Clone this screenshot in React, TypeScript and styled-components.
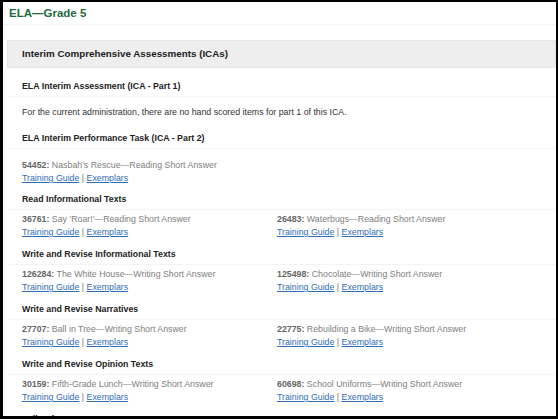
import React from "react";
import styled, { createGlobalStyle } from "styled-components";

const Global = createGlobalStyle`
  html, body { margin: 0; padding: 0; background: #000; }
  body { font-family: "Liberation Sans", Arial, sans-serif; }
`;

const Frame = styled.div`
  box-sizing: border-box;
  width: 558px;
  height: 419px;
  border-style: solid;
  border-color: #000;
  border-width: 2px 2px 3px 3px;
  background: #fff;
  overflow: hidden;
`;

const Title = styled.h1`
  margin: 0;
  height: 22px;
  line-height: 22px;
  padding-left: 6px;
  font-size: 11.5px;
  font-weight: bold;
  color: #1f6b3e;
  border-bottom: 1px solid #f3f3f3;
`;

const Section = styled.section`
  margin: 15px 0 0 4px;
`;

const SectionHeader = styled.h2`
  box-sizing: border-box;
  margin: 0;
  height: 28px;
  line-height: 26px;
  padding-left: 14px;
  background: #eeeeee;
  border: 1px solid #e6e6e6;
  font-size: 9.8px;
  font-weight: bold;
  color: #222;
`;

const Body = styled.div`
  margin-top: 9px;
  color: #333;
  font-size: 8.8px;
`;

const GroupHeading = styled.h3`
  box-sizing: border-box;
  margin: 0;
  height: 20px;
  line-height: 19px;
  padding-left: 15px;
  font-size: 8.8px;
  font-weight: bold;
  color: #222;
  border-bottom: 1px solid #f3f3f3;
`;

const Note = styled.p`
  margin: 0;
  padding: 9px 0 10px 15px;
  line-height: 13px;
  color: #333;
`;

const ItemGrid = styled.div<{ $top: number; $bottom: number }>`
  display: grid;
  grid-template-columns: 255px 1fr;
  padding: ${(p) => p.$top}px 0 ${(p) => p.$bottom}px 15px;
  line-height: 13px;
`;

const Item = styled.div``;

const ItemTitle = styled.div`
  color: #808080;
  b {
    color: #666;
    font-weight: bold;
  }
`;

const Links = styled.div`
  color: #777;
  a {
    color: #2f6db6;
    text-decoration: underline;
  }
`;

type It = { id: string; name: string };

const groups: { heading: string; top: number; bottom: number; items: It[] }[] = [
  {
    heading: "ELA Interim Performance Task (ICA - Part 2)",
    top: 10,
    bottom: 5,
    items: [{ id: "54452", name: "Nasbah's Rescue—Reading Short Answer" }],
  },
  {
    heading: "Read Informational Texts",
    top: 3,
    bottom: 6,
    items: [
      { id: "36761", name: "Say 'Roar!'—Reading Short Answer" },
      { id: "26483", name: "Waterbugs—Reading Short Answer" },
    ],
  },
  {
    heading: "Write and Revise Informational Texts",
    top: 3,
    bottom: 6,
    items: [
      { id: "126284", name: "The White House—Writing Short Answer" },
      { id: "125498", name: "Chocolate—Writing Short Answer" },
    ],
  },
  {
    heading: "Write and Revise Narratives",
    top: 3,
    bottom: 6,
    items: [
      { id: "27707", name: "Ball in Tree—Writing Short Answer" },
      { id: "22775", name: "Rebuilding a Bike—Writing Short Answer" },
    ],
  },
  {
    heading: "Write and Revise Opinion Texts",
    top: 3,
    bottom: 6,
    items: [
      { id: "30159", name: "Fifth-Grade Lunch—Writing Short Answer" },
      { id: "60698", name: "School Uniforms—Writing Short Answer" },
    ],
  },
  {
    heading: "Full Write",
    top: 3,
    bottom: 6,
    items: [],
  },
];

export default function App() {
  return (
    <>
      <Global />
      <Frame>
        <Title>ELA—Grade 5</Title>
        <Section>
          <SectionHeader>Interim Comprehensive Assessments (ICAs)</SectionHeader>
          <Body>
            <GroupHeading>ELA Interim Assessment (ICA - Part 1)</GroupHeading>
            <Note>
              For the current administration, there are no hand scored items for part 1 of this ICA.
            </Note>
            {groups.map((g) => (
              <React.Fragment key={g.heading}>
                <GroupHeading>{g.heading}</GroupHeading>
                {g.items.length > 0 && (
                  <ItemGrid $top={g.top} $bottom={g.bottom}>
                    {g.items.map((it) => (
                      <Item key={it.id}>
                        <ItemTitle>
                          <b>{it.id}:</b> {it.name}
                        </ItemTitle>
                        <Links>
                          <a href="#">Training Guide</a> | <a href="#">Exemplars</a>
                        </Links>
                      </Item>
                    ))}
                  </ItemGrid>
                )}
              </React.Fragment>
            ))}
          </Body>
        </Section>
      </Frame>
    </>
  );
}
